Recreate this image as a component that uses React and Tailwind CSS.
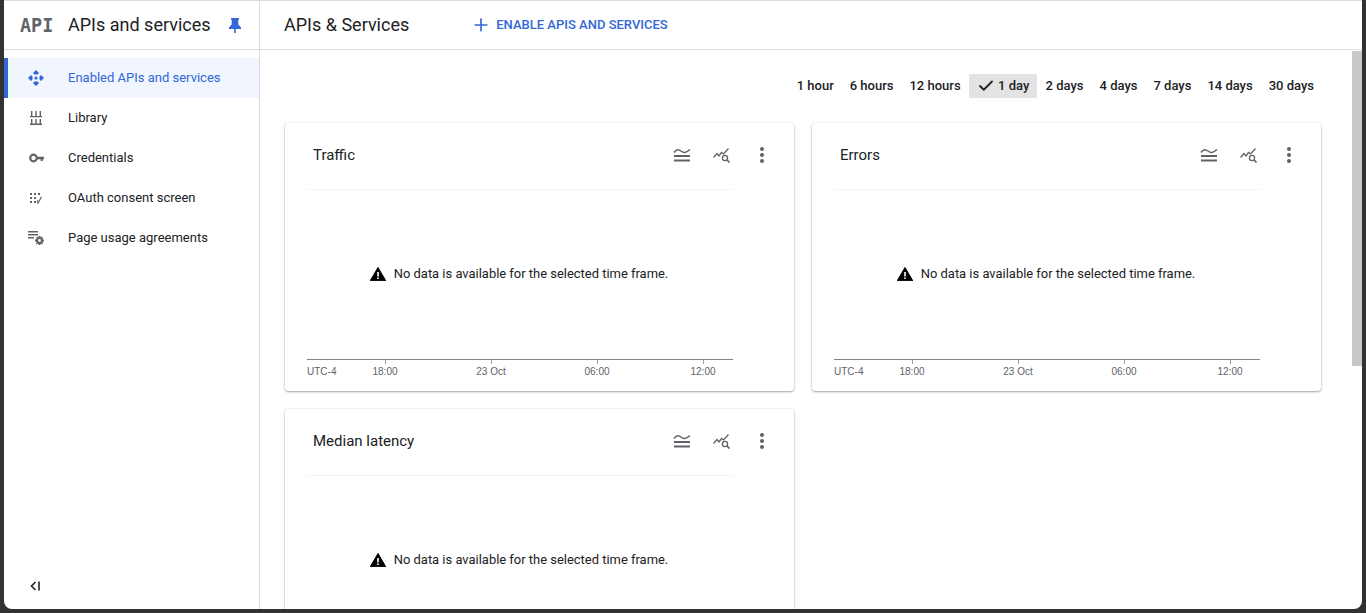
import React from "react";
import { Plus, Check } from "lucide-react";

const navItems = [
  { label: "Enabled APIs and services", icon: <ApiIcon />, active: true },
  { label: "Library", icon: <LibraryIcon /> },
  { label: "Credentials", icon: <KeyIcon /> },
  { label: "OAuth consent screen", icon: <ConsentIcon /> },
  { label: "Page usage agreements", icon: <AgreementIcon /> },
];

const ranges = ["1 hour", "6 hours", "12 hours", "1 day", "2 days", "4 days", "7 days", "14 days", "30 days"];

const ticks = [
  { label: "18:00", left: "left-[78px]" },
  { label: "23 Oct", left: "left-[184px]" },
  { label: "06:00", left: "left-[290px]" },
  { label: "12:00", left: "left-[396px]" },
];

function ApiIcon() {
  return (
    <svg width="16" height="16" viewBox="0 0 16 16" fill="currentColor">
      <path d="M8 0 11 3 9.500 4.500h-3L5 3zM8 16 5 13 6.500 11.500h3L11 13zM0 8 3 5 4.500 6.500v3L3 11zM16 8 13 11 11.500 9.500v-3L13 5z" />
      <circle cx="8" cy="8" r="1.600" />
    </svg>
  );
}

function LibraryIcon() {
  return (
    <svg width="12" height="14" viewBox="0 0 12 14" fill="#5f6368">
      <path d="M1 0h1.400v5H1zM5.300 0h1.400v5H5.300zM9.600 0h1.400v5H9.600zM0 5h12v1.200H0zM1 8h1.400v4.500H1zM5.300 8h1.400v4.500H5.300zM9.600 8h1.400v4.500H9.600zM0 12.500h12V14H0z" />
    </svg>
  );
}

function KeyIcon() {
  return (
    <svg width="15" height="10" viewBox="0 0 15 10" fill="none">
      <circle cx="4.500" cy="5" r="3.300" stroke="#5f6368" strokeWidth="2.200" />
      <path d="M7.500 3.800H15v2.400h-1.200V8h-2.200V6.200H7.500z" fill="#5f6368" />
    </svg>
  );
}

function ConsentIcon() {
  return (
    <svg width="12" height="11" viewBox="0 0 12 11" fill="#5f6368">
      <path d="M0 0h2v2H0zM4 0h2v2H4zM8 0h2v2H8zM0 4h2v2H0zM4 4h2v2H4zM0 8h2v2H0zM4 8h2v2H4z" />
      <path d="M7 10.800 11 3.500 12 4.300 8.200 11z" />
      <path d="M6.500 7.500 7.500 7 8.500 9 7.500 9.800z" />
    </svg>
  );
}

function AgreementIcon() {
  return (
    <svg width="16" height="14" viewBox="0 0 16 14" fill="#5f6368">
      <path d="M0 0h10v1.400H0zM0 3h10v1.400H0zM0 6h6v1.400H0z" />
      <circle cx="11.500" cy="9.500" r="2.500" fill="none" stroke="#5f6368" strokeWidth="2.200" />
      <path d="M10.500 5h2v1.500h-2zM10.500 12.500h2V14h-2zM7 8.500h1.500v2H7zM14.500 8.500H16v2h-1.500z" />
      <path d="M8 6.200 9.200 5.500 10 6.500 9 7.500zM15 6.200 13.800 5.500 13 6.500 14 7.500zM8 12.800 9.200 13.500 10 12.500 9 11.500zM15 12.800 13.800 13.500 13 12.500 14 11.500z" />
    </svg>
  );
}

function PinIcon() {
  return (
    <svg width="12" height="15" viewBox="0 0 12 15" fill="#3367d6">
      <path d="M2 0h8v1.500L9.300 2v4.500L12 9.500V11H6.800v4H5.200v-4H0V9.500l2.700-3V2L2 1.500z" />
    </svg>
  );
}

function CollapseIcon() {
  return (
    <svg width="10" height="10" viewBox="0 0 10 10" fill="none" stroke="#202124" strokeWidth="1.600">
      <path d="M5.500 1 1.500 5l4 4" />
      <path d="M9 .5v9" />
    </svg>
  );
}

function LegendIcon() {
  return (
    <svg width="18" height="16" viewBox="0 0 18 16" fill="none" stroke="#5f6368" strokeWidth="2">
      <path d="M1 5.500 C3.500 2 5.500 2 8 4 S12.500 6.500 17 2.500" strokeWidth="1.500" />
      <path d="M1 9h16M1 13.500h16" />
    </svg>
  );
}

function ExploreIcon() {
  return (
    <svg width="18" height="15" viewBox="0 0 18 15" fill="none" stroke="#5f6368" strokeWidth="1.300">
      <path d="M.5 9.500 4 5.500 6 8 8.500 4.500 10.500 6 15.500.5" />
      <circle cx="12" cy="10" r="2.600" />
      <path d="M14 12 16.500 14.500" strokeWidth="1.700" />
    </svg>
  );
}

function MoreIcon() {
  return (
    <svg width="6" height="16" viewBox="0 0 6 16" fill="#5f6368">
      <circle cx="3" cy="2" r="2" />
      <circle cx="3" cy="8" r="2" />
      <circle cx="3" cy="14" r="2" />
    </svg>
  );
}

function WarningIcon() {
  return (
    <svg width="16" height="14" viewBox="0 0 16 14">
      <path d="M8 .500 15.800 13.800H.2z" fill="#000" stroke="#000" strokeLinejoin="round" />
      <path d="M7.200 5h1.600v4.500H7.200zM7.200 10.500h1.600v1.500H7.200z" fill="#fff" />
    </svg>
  );
}

function ChartCard({ title, showAxis = true }) {
  return (
    <div className="w-[509px] h-[268px] shrink-0 bg-white rounded shadow-[0_1px_2px_rgba(60,64,67,0.45),0_0_3px_rgba(60,64,67,0.12)] pl-[22px]">
      <div className="w-[426px] h-[67px] flex items-center border-b border-[#f1f3f4] pt-[1px]">
        <h2 className="ml-[6px] text-[15px] text-[#202124] mb-[3px]">{title}</h2>
        <div className="ml-auto flex items-center gap-[22px] -mr-[32px] mb-[3px]">
          <LegendIcon />
          <ExploreIcon />
          <span className="ml-[6px] flex"><MoreIcon /></span>
        </div>
      </div>
      <div className="w-[426px] h-[170px] flex items-center justify-center gap-[8px] text-[12.95px] text-[#202124] pb-[2px] pr-[2px] border-b border-[#80868b]">
        <WarningIcon />
        <span>No data is available for the selected time frame.</span>
      </div>
      {showAxis && (
        <div className="relative w-[426px] h-[24px] text-[10px] text-[#5f6368] font-['Liberation_Sans',sans-serif]">
          <span className="absolute left-0 top-[4px]">UTC-4</span>
          {ticks.map((tick) => (
            <div key={tick.label} className={`absolute top-0 ${tick.left} flex flex-col items-center -translate-x-1/2 w-[40px]`}>
              <div className="w-px h-[4px] bg-[#9aa0a6]" />
              <span>{tick.label}</span>
            </div>
          ))}
        </div>
      )}
    </div>
  );
}

export default function App() {
  return (
    <div className="h-[613px] w-[1366px] overflow-hidden bg-[#323232] pl-[4px] pr-[4px] pb-[4px] font-['Roboto',sans-serif]">
      <div className="h-full bg-white rounded-b-lg border-t border-[#dadce0] flex overflow-hidden">
        <aside className="w-[256px] shrink-0 border-r border-[#dadce0] flex flex-col">
          <div className="h-[48px] shrink-0 border-b border-[#dadce0] flex items-center box-content">
            <span className="ml-[16px] w-[32px] text-[20px] font-bold text-[#5f6368] leading-none font-['DejaVu_Sans_Mono',monospace] whitespace-nowrap scale-x-[0.92] origin-left">API</span>
            <span className="ml-[16px] text-[18px] text-[#202124] mb-[2px]">APIs and services</span>
            <span className="ml-[18px] flex"><PinIcon /></span>
          </div>
          <nav className="pt-[8px] flex flex-col">
            {navItems.map((item) => (
              <a
                key={item.label}
                href="#"
                className={
                  item.active
                    ? "h-[40px] flex items-center text-[13px] text-[#3367d6] bg-[#f0f5fe] border-l-4 border-[#3367d6]"
                    : "h-[40px] flex items-center text-[13px] text-[#202124] border-l-4 border-transparent"
                }
              >
                <span className="w-[60px] flex justify-center shrink-0 pr-[4px]">{item.icon}</span>
                <span>{item.label}</span>
              </a>
            ))}
          </nav>
          <div className="mt-auto pl-[26px] pb-[18px] flex"><CollapseIcon /></div>
        </aside>

        <main className="flex-1 min-w-0 flex flex-col">
          <header className="h-[49px] shrink-0 border-b border-[#dadce0] flex items-center pl-[24px]">
            <h1 className="text-[18px] text-[#202124] mb-[2px]">APIs &amp; Services</h1>
            <a href="#" className="ml-[62px] flex items-center text-[#3367d6] text-[13px] font-medium">
              <Plus size={20} strokeWidth={2} className="mr-[5px]" />
              ENABLE APIS AND SERVICES
            </a>
          </header>
          <div className="flex-1 min-h-0 flex">
            <div className="flex-1 min-w-0 overflow-hidden pl-[25px]">
              <div className="h-[24px] mt-[24px] flex justify-end items-center pr-[30px] text-[13px] font-medium text-[#202124]">
                {ranges.map((range) =>
                  range === "1 day" ? (
                    <span key={range} className="h-[24px] w-[68px] mr-[1px] flex items-center bg-[#e3e3e3] pl-[8px] gap-[3.5px]">
                      <Check size={18} strokeWidth={2.4} />
                      {range}
                    </span>
                  ) : (
                    <span key={range} className="px-[8px]">{range}</span>
                  )
                )}
              </div>
              <div className="mt-[25px] flex flex-wrap gap-[18px]">
                <ChartCard title="Traffic" />
                <ChartCard title="Errors" />
                <ChartCard title="Median latency" showAxis={false} />
              </div>
            </div>
            <div className="w-[10px] shrink-0 pt-[1px]">
              <div className="h-[315px] bg-[#c8c8c8]" />
            </div>
          </div>
        </main>
      </div>
    </div>
  );
}
